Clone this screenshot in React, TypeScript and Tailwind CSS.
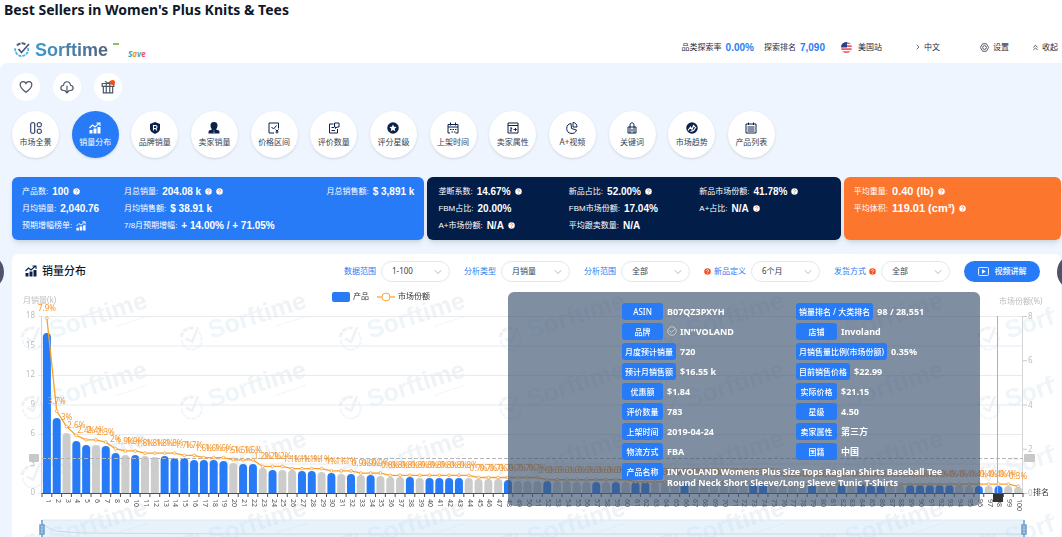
import type { ReactNode } from 'react'
import { ChevronRight, ChevronsUp, ChevronDown } from 'lucide-react'

const Stroke = ({ children }: { children: ReactNode }) => (
    <svg
        viewBox="0 0 24 24"
        className="size-3"
        fill="none"
        stroke="currentColor"
        strokeWidth="2"
    >
        {children}
    </svg>
)

const ChartIcon = ({ className = 'size-3' }: { className?: string }) => (
    <svg viewBox="0 0 24 24" className={className} fill="currentColor">
        <path d="M1 16h6v7H1zM9 13h6v10H9zM17 10h6v13h-6z" />
        <path
            d="M1 12l6-6 5 4 9-8M15 2h7v6"
            fill="none"
            stroke="currentColor"
            strokeWidth="2.2"
        />
    </svg>
)

const tabs: { title: string; icon: ReactNode }[] = [
    {
        title: '市场全景',
        icon: (
            <Stroke>
                <rect x="1.5" y="1.5" width="8" height="21" rx="2" />
                <rect x="14.5" y="1.5" width="8" height="8" rx="2" />
                <rect x="14.5" y="14.5" width="8" height="8" rx="2" />
            </Stroke>
        )
    },
    { title: '销量分布', icon: <ChartIcon /> },
    {
        title: '品牌销量',
        icon: (
            <svg viewBox="0 0 24 24" className="size-3">
                <path
                    d="M12 0l10 4v10c0 4-5 8-10 10C7 22 2 18 2 14V4z"
                    fill="currentColor"
                />
                <path
                    d="M9 17V7h4a3 3 0 010 6H9m4 0l3 4"
                    fill="none"
                    stroke="#fff"
                    strokeWidth="2.2"
                />
            </svg>
        )
    },
    {
        title: '卖家销量',
        icon: (
            <svg viewBox="0 0 24 24" className="size-3" fill="currentColor">
                <path d="M12 0c5 0 7 3 7 7 0 4-2 6-3 8l6 2c1 1 1 3 1 6H1c0-3 0-5 1-6l6-2c-1-2-3-4-3-8 0-4 2-7 7-7z" />
                <path d="M11 17h2l-1 2 1 3h-2l1-3z" fill="#fff" />
            </svg>
        )
    },
    {
        title: '价格区间',
        icon: (
            <Stroke>
                <path d="M12 22H2V2h19v11M7 10l4 4 6-7M15 15l3 3 3-3M18 18v5M15 20h6" />
            </Stroke>
        )
    },
    {
        title: '评价数量',
        icon: (
            <Stroke>
                <path d="M11 4H3v18h16v-8M7 11h5M7 17h7M13 2h9v8h-4l-3 3v-3h-2z" />
            </Stroke>
        )
    },
    {
        title: '评分星级',
        icon: (
            <svg viewBox="0 0 24 24" className="size-3">
                <circle cx="12" cy="12" r="11.5" fill="currentColor" />
                <path
                    d="M12 5l2.2 4.6 5 .6-3.7 3.4 1 5L12 16.1l-4.5 2.5 1-5-3.7-3.4 5-.6z"
                    fill="#fff"
                />
            </svg>
        )
    },
    {
        title: '上架时间',
        icon: (
            <Stroke>
                <path d="M6 22H2V5h20v17h-5M2 10h20M7 1v6M17 1v6M6 15h3M11 15h3M16 15h3M9 20h3M14 20h3" />
            </Stroke>
        )
    },
    {
        title: '卖家属性',
        icon: (
            <Stroke>
                <path d="M2 2h20v20H2zM2 7h20M6 12h4l-4 6h4M13 15h6M16 12l3 3-3 3" />
            </Stroke>
        )
    },
    {
        title: 'A+视频',
        icon: (
            <Stroke>
                <path d="M10 3a10 10 0 1011 13l-10-3zM14 1v9h8c0-5-3-9-8-9z" />
            </Stroke>
        )
    },
    {
        title: '关键词',
        icon: (
            <Stroke>
                <path d="M4 10h16v12H4zM8 10V6c0-6 8-6 8 0v4M12 14v5M8 10v12M16 10v12" />
            </Stroke>
        )
    },
    {
        title: '市场趋势',
        icon: (
            <svg viewBox="0 0 24 24" className="size-3">
                <circle cx="12" cy="12" r="11.5" fill="currentColor" />
                <path
                    d="M4 17l5-7 3 5 3-8 3 3M9 19l6-2 5-7"
                    fill="none"
                    stroke="#fff"
                    strokeWidth="2.4"
                />
            </svg>
        )
    },
    {
        title: '产品列表',
        icon: (
            <Stroke>
                <path d="M2 4h20v18H2zM7 1v5M17 1v5M5 10h14M5 14h14M5 18h14" />
            </Stroke>
        )
    }
]

const Help = ({ solid = false }: { solid?: boolean }) => (
    <svg viewBox="0 0 14 14" className="size-[7px] shrink-0">
        <circle cx="7" cy="7" r="6.5" fill={solid ? '#f4511e' : '#fff'} />
        <path
            d="M4.8 5.5c0-3 4.6-2.6 4.4 0C9.1 7 7 7 7 8.700M7 10v1.400"
            fill="none"
            stroke={solid ? '#fff' : '#f4703a'}
            strokeWidth="1.6"
        />
    </svg>
)

const Stat = ({
    label,
    value,
    help = 0,
    large = false
}: {
    label: string
    value: ReactNode
    help?: number
    large?: boolean
}) => (
    <p className="flex h-[17px] items-center gap-1 whitespace-nowrap text-[8px]">
        <span>{label}:</span>
        <strong className={large ? 'text-[11px]' : 'text-[10px]'}>
            {value}
        </strong>
        {Array.from({ length: help }, (_, i) => (
            <Help key={i} />
        ))}
    </p>
)

const Logo = () => (
    <a href="#" className="flex items-center gap-[5px] pt-[6px]">
        <svg viewBox="0 0 32 32" className="size-4" fill="none">
            <path
                d="M6 7A13 13 0 0123 5"
                stroke="#4b5f80"
                strokeWidth="4"
                strokeDasharray="8 2"
            />
            <path
                d="M28 12a13 13 0 11-25-1"
                stroke="#52aede"
                strokeWidth="3.5"
                strokeDasharray="6 2"
            />
            <path d="M9 14l6 7L30 4" stroke="#46597b" strokeWidth="3.5" />
        </svg>
        <span className="bg-linear-to-r from-[#3a9bd0] to-[#50627f] bg-clip-text font-['Liberation_Sans',sans-serif] text-lg leading-5 font-bold text-transparent">
            Sorftime
        </span>
        <span className="mb-3 h-[2px] w-[6px] bg-[#83c35a]" />
        <span className="mt-2 ml-1 text-[8px] leading-none font-bold italic">
            <span className="text-[#21a5c9]">S</span>
            <span className="text-[#f59a23]">a</span>
            <span className="text-[#3db38b]">v</span>
            <span className="text-[#ee4c7d]">e</span>
        </span>
    </a>
)

const Header = () => (
    <header className="flex h-10 items-center pt-2 pr-1 pl-[14px] text-[8px] text-gray-800">
        <Logo />
        <p className="ml-auto flex items-center gap-1">
            品类探索率
            <strong className="font-['Liberation_Sans',sans-serif] text-[10px] text-[#2b7bf3]">
                0.00%
            </strong>
        </p>
        <p className="ml-[10px] flex items-center gap-1">
            探索排名
            <strong className="font-['Liberation_Sans',sans-serif] text-[10px] text-[#2b7bf3]">
                7,090
            </strong>
        </p>
        <p className="ml-4 flex items-center gap-[6px]">
            <svg viewBox="0 0 22 22" className="size-[11px] rounded-full">
                <rect width="22" height="22" fill="#fff" />
                <path
                    d="M0 2h22M0 8h22M0 14h22M0 20h22"
                    stroke="#f0596b"
                    strokeWidth="3.5"
                />
                <rect width="12" height="11" fill="#2b3f8f" />
            </svg>
            美国站
        </p>
        <button className="ml-8 flex items-center gap-[2px]">
            <ChevronRight className="size-2" />
            中文
        </button>
        <button className="ml-10 flex items-center gap-1">
            <svg
                viewBox="0 0 24 24"
                className="size-[9px]"
                fill="none"
                stroke="currentColor"
                strokeWidth="2"
            >
                <path d="M7 2h10l6 10-6 10H7L1 12z" />
                <circle cx="12" cy="12" r="5" />
            </svg>
            设置
        </button>
        <button className="ml-[22px] flex items-center gap-[2px]">
            <ChevronsUp className="size-[9px]" />
            收起
        </button>
    </header>
)

const Tools = () => (
    <div className="flex gap-[13px]">
        {[
            {
                title: '收藏',
                path: 'M12 21C4 15 2 12 2 8c0-6 8-7 10-2 2-5 10-4 10 2 0 4-2 7-10 13z'
            },
            {
                title: '下载',
                path: 'M8 18H6c-6 0-6-8 0-9 1-8 11-8 12 0 6 1 6 9 0 9h-2M12 10v12M8 18l4 4 4-4'
            },
            {
                title: '礼物',
                path: 'M2 6h20v5H2zM4 11h16v11H4zM9 6v16M15 6v16M7 2l5 4 5-4'
            }
        ].map(({ title, path }, i) => (
            <button
                key={title}
                aria-label={title}
                className="relative flex size-7 items-center justify-center rounded-full bg-white text-gray-600"
            >
                <svg
                    viewBox="0 0 24 24"
                    className="size-[14px]"
                    fill="none"
                    stroke="currentColor"
                    strokeWidth="2"
                >
                    <path d={path} />
                </svg>
                {i === 2 && (
                    <span className="absolute top-[7px] right-[7px] size-[5px] rounded-full bg-[#fb4d0b]" />
                )}
            </button>
        ))}
    </div>
)

const Tabs = () => (
    <nav className="mt-[10px] flex max-w-[763px] justify-between">
        {tabs.map(({ title, icon }) => (
            <button
                key={title}
                className={
                    title === '销量分布'
                        ? 'flex size-[47px] flex-col items-center justify-center gap-[2px] rounded-full bg-[#287bf6] text-white shadow'
                        : 'flex size-[47px] flex-col items-center justify-center gap-[2px] rounded-full bg-white text-[#0b2149] shadow'
                }
            >
                {icon}
                <span
                    className={
                        title === '销量分布'
                            ? 'text-[8px] leading-3'
                            : 'text-[8px] leading-3 text-gray-700'
                    }
                >
                    {title}
                </span>
            </button>
        ))}
    </nav>
)

const Stats = () => (
    <section className="mt-[19px] grid grid-cols-[412fr_413fr_217fr] gap-[3px] font-['Liberation_Sans','Noto_Sans_CJK_SC',sans-serif] text-white">
        <div className="grid grid-cols-[102px_1fr_auto] rounded-md bg-[#287bf6] px-[10px] py-[6px] shadow-md">
            <Stat label="产品数" value="100" help={1} />
            <Stat label="月总销量" value="204.08 k" help={2} />
            <Stat label="月总销售额" value="$ 3,891 k" />
            <Stat label="月均销量" value="2,040.76" />
            <Stat label="月均销售额" value="$ 38.91 k" />
            <span />
            <Stat
                label="预期增幅榜单"
                value={<ChartIcon className="size-[10px]" />}
            />
            <Stat label="7/8月预期增幅" value="+ 14.00% / + 71.05%" />
        </div>
        <div className="grid grid-cols-3 rounded-md bg-[#021d47] px-[11px] py-[6px] shadow-md">
            <Stat label="垄断系数" value="14.67%" help={1} />
            <Stat label="新品占比" value="52.00%" help={1} />
            <Stat label="新品市场份额" value="41.78%" help={1} />
            <Stat label="FBM占比" value="20.00%" />
            <Stat label="FBM市场份额" value="17.04%" />
            <Stat label="A+占比" value="N/A" help={1} />
            <Stat label="A+市场份额" value="N/A" help={1} />
            <Stat label="平均跟卖数量" value="N/A" />
        </div>
        <div className="rounded-md bg-[#fd762d] px-[10px] py-[6px] shadow-md">
            <Stat label="平均重量" value="0.40 (lb)" help={1} large />
            <Stat label="平均体积" value="119.01 (cm³)" help={1} large />
        </div>
    </section>
)

const filters = [
    { id: 'range', title: '数据范围', value: '1-100' },
    { id: 'type', title: '分析类型', value: '月销量' },
    { id: 'scope', title: '分析范围', value: '全部' },
    { id: 'new', title: '新品定义', value: '6个月' },
    { id: 'ship', title: '发货方式', value: '全部' }
]

const Filters = () => (
    <div className="flex h-[34px] items-center gap-[14px] pr-[21px] pl-[13px] text-[8px]">
        <h2 className="mr-auto flex items-center gap-[5px] text-[11px] font-medium text-gray-900">
            <ChartIcon className="size-3 text-[#0b2149]" />
            销量分布
        </h2>
        {filters.map(({ id, title, value }) => (
            <div key={id} className="flex items-center gap-[5px]">
                <label
                    htmlFor={id}
                    className="flex items-center gap-[3px] text-[#2b7bf3]"
                >
                    {id === 'new' && <Help solid />}
                    {title}
                    {id === 'ship' && <Help solid />}
                </label>
                <div className="relative">
                    <select
                        id={id}
                        className="block h-[21px] w-[69px] appearance-none rounded-full border border-gray-200 bg-white pl-[10px] text-gray-700"
                    >
                        <option>{value}</option>
                    </select>
                    <ChevronDown
                        className="pointer-events-none absolute top-[5px] right-[6px] size-3 text-gray-400"
                        strokeWidth={1.5}
                    />
                </div>
            </div>
        ))}
        <button className="flex h-[21px] w-[76px] items-center justify-center gap-[6px] rounded-full bg-[#287bf6] font-medium text-white">
            <svg viewBox="0 0 24 20" className="h-[9px] w-[11px]" fill="none">
                <rect
                    x="1"
                    y="1"
                    width="22"
                    height="18"
                    rx="2"
                    stroke="currentColor"
                    strokeWidth="2"
                />
                <path d="M9 5l8 5-8 5z" fill="currentColor" />
            </svg>
            视频讲解
        </button>
    </div>
)

const LEFT = 30
const RIGHT = 1011
const TOP = 28
const BASE = 205
const STEP = (RIGHT - LEFT) / 100

// height of the first bars, the tail is nearly flat
const head = [
    160, 75, 60, 52, 48, 48, 47, 40, 38, 38, 37, 36, 37, 35, 35, 33, 33, 33, 32,
    30, 29, 29, 25, 23, 23, 23, 22, 22, 21, 20, 19, 19, 18, 18, 17, 16, 16, 16,
    15, 15, 15, 15, 15, 15, 14, 14, 14, 13
]
const bars = Array.from(
    { length: 100 },
    (_, i) => head[i] ?? (i === 99 ? 6 : Math.round(12 - (i - 48) / 10))
)

const blue = [
    1, 2, 4, 5, 7, 8, 10, 13, 14, 15, 16, 17, 18, 19, 21, 22, 24, 27, 28, 30,
    32, 34, 38, 40, 41, 42, 43, 48, 52, 57, 59, 61, 62, 66, 73, 74, 79, 82, 84,
    85, 86, 89, 90, 91, 92, 93, 96, 98
]

const shares = [
    [7.9, 1],
    [3.7, 1],
    [3, 1],
    [2.6, 1],
    [2.4, 2],
    [2.3, 1],
    [2, 1],
    [1.9, 2],
    [1.8, 4],
    [1.7, 2],
    [1.6, 3],
    [1.5, 3],
    [1.2, 3],
    [1.1, 4],
    [1, 3],
    [0.9, 3],
    [0.8, 9],
    [0.7, 7],
    [0.6, 9],
    [0.5, 15],
    [0.4, 24],
    [0.3, 1]
].flatMap(([value, count]) => Array<number>(count).fill(value))

const x = (i: number) => LEFT + (i + 0.5) * STEP
const y = (value: number) => BASE - (value * (BASE - TOP)) / 8

const Watermark = () => (
    <g clipPath="url(#plot)" opacity="0.09">
        {[50, 119, 188, 257].flatMap((top) =>
            [20, 179, 338, 498, 657, 816, 976].map((left) => (
                <g
                    key={`${left}-${top}`}
                    transform={`translate(${left} ${top}) rotate(-18)`}
                >
                    <path
                        d="M-9-4A10 10 0 016-8"
                        fill="none"
                        stroke="#50627f"
                        strokeWidth="3"
                        strokeDasharray="5 1"
                    />
                    <path
                        d="M9-3A10 10 0 11-9-2"
                        fill="none"
                        stroke="#3a9bd0"
                        strokeWidth="2"
                        strokeDasharray="4 1"
                    />
                    <path
                        d="M-5-1l5 5L10-8"
                        fill="none"
                        stroke="#50627f"
                        strokeWidth="2.5"
                    />
                    <text
                        x="19"
                        y="7"
                        fill="url(#brand)"
                        className="font-['Liberation_Sans',sans-serif] text-[25px] font-bold"
                    >
                        Sorftime
                    </text>
                    <path
                        d="M84 15h33"
                        stroke="#50627f"
                        strokeDasharray="2 1"
                    />
                </g>
            ))
        )}
    </g>
)

const Slider = () => (
    <g>
        <path
            d="M30 249V232H1012V249"
            fill="#bfdcf5"
            fillOpacity="0.38"
            stroke="#dbe9f5"
        />
        <path
            d="M31 236L35 239L43 243L70 245L230 246H1010"
            fill="none"
            stroke="#cbd9e4"
        />
        {[30, 1012].map((left) => (
            <g key={left} stroke="#6c9fcb">
                <path d={`M${left} 232v17`} strokeWidth="1.5" />
                <rect
                    x={left - 2}
                    y="237"
                    width="4"
                    height="9"
                    fill="#a9cbe8"
                    strokeWidth="1.5"
                />
                <path d={`M${left - 2} 240h4M${left - 2} 243h4`} />
            </g>
        ))}
    </g>
)

const Chart = () => (
    <svg
        viewBox="0 0 1049 249"
        className="block h-auto w-full text-[8px]"
        fill="#bdbdc2"
    >
        <defs>
            <clipPath id="plot">
                <rect width="1042" height="249" />
            </clipPath>
            <linearGradient id="brand">
                <stop stopColor="#3a9bd0" />
                <stop offset="1" stopColor="#50627f" />
            </linearGradient>
        </defs>

        <Watermark />

        {[18, 15, 12, 9, 6, 3, 0].map((value, i) => (
            <g key={value}>
                <path
                    d={`M${LEFT - 4} ${TOP + i * 29.5 + 0.5}H${RIGHT}`}
                    stroke="#e9eaee"
                />
                <text x="23" y={TOP + i * 29.5 + 2} textAnchor="end">
                    {value}
                </text>
            </g>
        ))}
        {[8, 6, 4, 2, 0].map((value) => (
            <g key={value}>
                <path d={`M${RIGHT} ${y(value) + 0.5}h4`} stroke="#c9c9cd" />
                <text x="1016" y={y(value) + 3}>
                    {value}
                </text>
            </g>
        ))}
        <path
            d={`M${LEFT - 0.5} ${TOP}V${BASE}M${RIGHT - 0.5} ${TOP}V${BASE}`}
            stroke="#d4d4d8"
        />
        <text x="11" y="15">
            月销量(k)
        </text>
        <text x="987" y="16">
            市场份额(%)
        </text>

        {bars.map((height, i) => (
            <path
                key={i}
                d={`M${x(i) - 4} ${BASE}v${4 - height}a4 4 0 018 0v${height - 4}z`}
                fill={blue.includes(i + 1) ? '#287bf6' : '#ccc'}
            />
        ))}

        <path d="M30 170.5H1011" stroke="#b5b5b5" strokeDasharray="4 2" />
        <path d="M985.5 28v177" stroke="#b0b0b0" />
        <rect x="17" y="166" width="10" height="8" rx="1" fill="#c8c8c8" />
        <rect x="1012" y="166" width="11" height="8" rx="1" fill="#c8c8c8" />

        <g stroke="#4b4f59">
            <path d={`M${LEFT} 205.5H${RIGHT}`} />
            {Array.from({ length: 101 }, (_, i) => (
                <path key={i} d={`M${LEFT + i * STEP} 205v4`} />
            ))}
        </g>
        {bars.map((_, i) => (
            <text
                key={i}
                transform={`translate(${x(i) - 1} 211) rotate(90)`}
                fill="#555"
                className="text-[7px]"
            >
                {i + 1}
            </text>
        ))}

        <polyline
            points={shares.map((value, i) => `${x(i)},${y(value)}`).join(' ')}
            fill="none"
            stroke="#f9a12e"
            strokeWidth="1.3"
            strokeLinejoin="round"
        />
        {shares.map((value, i) => (
            <g key={i}>
                <circle
                    cx={x(i)}
                    cy={y(value)}
                    r="1.4"
                    fill="#fff"
                    stroke="#f9a12e"
                    strokeWidth="0.8"
                />
                <text
                    x={x(i)}
                    y={y(value) - 7}
                    textAnchor="middle"
                    fill="#f9952a"
                >
                    {value}%
                </text>
            </g>
        ))}
        <rect x="981" y="206" width="10" height="8" fill="#333" />
        <text x="1021" y="207" fill="#333">
            排名
        </text>

        <rect x="320" y="4" width="18" height="10" rx="2" fill="#287bf6" />
        <text x="341" y="11" fill="#333">
            产品
        </text>
        <path d="M365 9h18" stroke="#f9a83c" strokeWidth="1.3" />
        <circle cx="374" cy="9" r="4" fill="#fff" stroke="#f9a83c" />
        <text x="386" y="11" fill="#333">
            市场份额
        </text>

        <Slider />
    </svg>
)

const Field = ({ label, value }: { label: string; value: string }) => (
    <div className="flex min-h-[17px] items-start gap-1">
        <dt className="flex h-[17px] min-w-[41px] shrink-0 items-center justify-center rounded-[3px] bg-[#287bf6] px-[3px] text-[8px] font-medium whitespace-nowrap">
            {label}
        </dt>
        <dd className="flex items-start gap-[3px] pt-[3px] text-[9px] leading-[11px] font-bold">
            {label === '品牌' && (
                <svg
                    viewBox="0 0 20 20"
                    className="size-[10px]"
                    fill="none"
                    stroke="#c9c9c9"
                    strokeWidth="2"
                >
                    <circle cx="10" cy="10" r="8.5" />
                    <path d="M5 9l4 4 7-7" />
                </svg>
            )}
            {value}
        </dd>
    </div>
)

const Tooltip = () => (
    <dl className="absolute top-[38px] right-[81px] grid w-[472px] grid-cols-[174px_1fr] gap-y-[3px] rounded-md bg-[rgba(68,89,117,0.68)] pt-[11px] pb-[18px] pl-[114px] text-white">
        <Field label="ASIN" value="B07QZ3PXYH" />
        <Field label="销量排名 / 大类排名" value="98 / 28,551" />
        <Field label="品牌" value="IN''VOLAND" />
        <Field label="店铺" value="Involand" />
        <Field label="月度预计销量" value="720" />
        <Field label="月销售量比例(市场份额)" value="0.35%" />
        <Field label="预计月销售额" value="$16.55 k" />
        <Field label="目前销售价格" value="$22.99" />
        <Field label="优惠额" value="$1.84" />
        <Field label="实际价格" value="$21.15" />
        <Field label="评价数量" value="783" />
        <Field label="星级" value="4.50" />
        <Field label="上架时间" value="2019-04-24" />
        <Field label="卖家属性" value="第三方" />
        <Field label="物流方式" value="FBA" />
        <Field label="国籍" value="中国" />
        <div className="col-span-2 max-w-[330px]">
            <Field
                label="产品名称"
                value="IN'VOLAND Womens Plus Size Tops Raglan Shirts Baseball Tee Round Neck Short Sleeve/Long Sleeve Tunic T-Shirts"
            />
        </div>
    </dl>
)

const App = () => (
    <div className="min-h-screen overflow-hidden bg-white font-['Noto_Sans','Noto_Sans_CJK_SC',sans-serif]">
        <h1 className="h-[23px] pl-1 text-sm leading-5 font-bold text-gray-900">
            Best Sellers in Women's Plus Knits &amp; Tees
        </h1>
        <Header />
        <main className="relative rounded-tl-lg bg-[#eef5ff] pt-[10px] pr-px pl-3">
            <Tools />
            <Tabs />
            <Stats />
            <section className="relative mt-[14px] rounded-t-md bg-white">
                <Filters />
                <Chart />
                <Tooltip />
                <button
                    aria-label="上一页"
                    className="absolute top-0 -left-11 size-9 rounded-full bg-[#51516a]"
                />
                <button
                    aria-label="下一页"
                    className="absolute top-0 -right-8 size-9 rounded-full bg-[#51516a]"
                />
            </section>
        </main>
    </div>
)

export default App
